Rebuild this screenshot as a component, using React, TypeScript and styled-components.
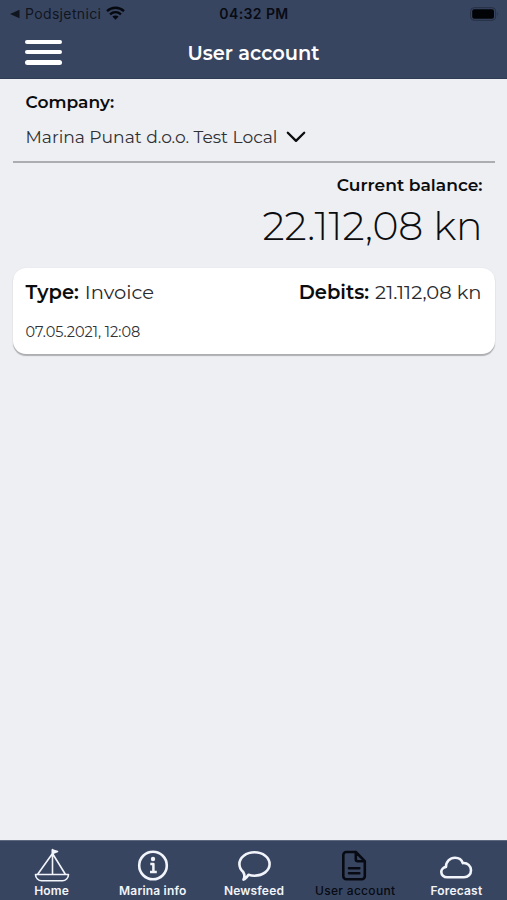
import React from 'react';
import styled, { createGlobalStyle } from 'styled-components';

const GlobalStyle = createGlobalStyle`
  * { box-sizing: border-box; }
  body { margin: 0; background: #eeeff3; font-family: Montserrat, Inter, sans-serif; color: #0b0c0e; }
`;

const Screen = styled.div`
  height: 900px;
  width: 100%;
  display: flex;
  flex-direction: column;
  overflow: hidden;
  white-space: nowrap;
`;

const Header = styled.header`
  flex: none;
  height: 79px;
  background: #384560;
  border-bottom: 1px solid #2f3b54;
`;

const StatusBar = styled.div`
  height: 27px;
  display: grid;
  grid-template-columns: 1fr auto 1fr;
  align-items: center;
  padding: 0 8px 0 10px;
  color: #080b14;
  font-family: Inter, sans-serif;
  font-size: 14px;
  line-height: 18px;
`;

const BackLink = styled.div`
  display: flex;
  align-items: center;
  letter-spacing: 0.35px;
  color: #10151f;
  > svg:first-child { margin-right: 5px; }
  > svg:last-child { margin-left: 5px; margin-top: -2px; }
`;

const Clock = styled.div`
  font-weight: 600;
  letter-spacing: 0.4px;
  margin-left: -1px;
`;

const Battery = styled.svg`
  justify-self: end;
`;

const TitleBar = styled.div`
  height: 51px;
  display: grid;
  grid-template-columns: 1fr auto 1fr;
  align-items: center;
  padding: 0 25px;
`;

const MenuButton = styled.button`
  width: 37px;
  height: 25px;
  padding: 0;
  border: 0;
  background: none;
  display: flex;
  flex-direction: column;
  justify-content: space-between;
  margin-top: -1px;
`;

const MenuLine = styled.span`
  width: 37px;
  height: 4.5px;
  border-radius: 3px;
  background: #fff;
`;

const Title = styled.h1`
  margin: 0;
  font-size: 19.4px;
  line-height: 24px;
  font-weight: 600;
  color: #fff;
`;

const Main = styled.main`
  flex: 1;
  padding: 0 12px 0 13px;
`;

const CompanySection = styled.section`
  height: 84px;
  padding: 12px 12.5px 0;
  border-bottom: 2px solid #abadb1;
`;

const Label = styled.div`
  font-size: 17.1px;
  line-height: 22px;
  font-weight: 600;
`;

const CompanySelect = styled.div`
  display: flex;
  align-items: center;
  gap: 9px;
  margin-top: 13px;
  font-size: 17.1px;
  line-height: 22px;
  color: #303134;
`;

const BalanceSection = styled.section`
  height: 105px;
  padding: 11px 12.5px 0;
  display: flex;
  flex-direction: column;
  align-items: flex-end;
`;

const Balance = styled.div`
  margin-top: 6px;
  font-size: 39.4px;
  line-height: 48px;
  font-weight: 350;
`;

const Card = styled.article`
  height: 86px;
  padding: 12px 13.5px 0 12.5px;
  border-radius: 13px;
  background: #fff;
  box-shadow: 0 2px 1px #adaeb1, 0 0 1px #d5d6da;
`;

const CardRow = styled.div`
  display: flex;
  justify-content: space-between;
`;

const Field = styled.div`
  display: flex;
  gap: 6px;
  font-size: 19.5px;
  line-height: 24px;
`;

const FieldName = styled.span`
  font-weight: 600;
`;

const FieldValue = styled.span`
  color: #292a2d;
`;

const DateText = styled.div`
  margin-top: 19px;
  font-size: 14.5px;
  line-height: 18px;
  color: #303134;
`;

const TabBar = styled.nav`
  flex: none;
  height: 60px;
  display: grid;
  grid-template-columns: repeat(5, 1fr);
  padding-left: 1px;
  background: #384560;
  border-top: 1px solid #5d687f;
`;

const Tab = styled.a<{ $active?: boolean }>`
  display: flex;
  flex-direction: column;
  align-items: center;
  padding-top: 6px;
  color: ${p => (p.$active ? '#070a12' : '#f1f4fa')};
`;

const TabLabel = styled.span<{ $active?: boolean }>`
  font-family: Inter, sans-serif;
  font-size: 12px;
  line-height: 16px;
  font-weight: ${p => (p.$active ? 500 : 600)};
  letter-spacing: ${p => (p.$active ? 0.3 : 0.18)}px;
`;

const TabIcon = styled.svg`
  width: 36px;
  height: 36px;
  fill: none;
  stroke: currentColor;
  stroke-width: 2.6;
  stroke-linecap: round;
  stroke-linejoin: round;
`;

const tabs = [
  {
    label: 'Home',
    icon: (
      <g strokeWidth="1.6">
        <path d="M18.5 2.5V27.5M18.5 6.5L3.5 27.5M18.5 6.5L31.5 27.5M1.5 27.5H34.5C34.5 31 31.5 33.8 28.5 33.8H7.5C4.5 33.8 1.5 31 1.5 27.5Z" />
        <path d="M18.5 3L23.5 4.5L18.5 6.5Z" fill="currentColor" />
      </g>
    ),
  },
  {
    label: 'Marina info',
    icon: (
      <>
        <circle cx="18" cy="18.5" r="13.8" />
        <circle cx="18" cy="12" r="2.2" fill="currentColor" stroke="none" />
        <path d="M15.3 17H18.4V24.7M15 24.9H21.8" strokeWidth="2.5" strokeLinecap="butt" />
      </>
    ),
  },
  {
    label: 'Newsfeed',
    icon: <path d="M7.2 25C4.6 22.7 3.4 20.2 3.4 17.1C3.4 10.5 10.1 5.2 18.5 5.2S33.6 10.5 33.6 17.1S26.9 28.7 18.5 28.7C16.3 28.7 14.2 28.3 12.5 27.7C10.8 30.2 9.2 32 7.5 32.6C8.3 31 8.7 27.5 7.2 25Z" />,
  },
  {
    label: 'User account',
    active: true,
    icon: <path d="M18.8 5H9.3A3 3 0 0 0 6.3 8V29.3A3 3 0 0 0 9.3 32.3H24.8A3 3 0 0 0 27.8 29.3V14.2L18.8 5V12.2A2 2 0 0 0 20.8 14.2H27.8M12 21.3H22.3M12 26.3H22.3" />,
  },
  {
    label: 'Forecast',
    icon: <path d="M9.2 30.3C5.7 30.3 3.3 28 3.3 25.1C3.3 22.2 5.5 20.2 8 19.9C7.8 14.9 12 10.7 17 10.7C21 10.7 23.8 13 24.8 16.1C29.5 15.6 33 19 33 23.2C33 27.3 30 30.3 26 30.3Z" />,
  },
];

export default function App() {
  return (
    <>
      <GlobalStyle />
      <Screen>
        <Header>
          <StatusBar>
            <BackLink>
              <svg width="10" height="10"><path d="M0 5L9.5 0.8V9.2Z" fill="currentColor" /></svg>
              Podsjetnici
              <svg width="19" height="14" viewBox="0 0 19 14">
                <path d="M1 5.2C6 .6 13 .6 18 5.2M4 8.4C7.3 5.5 11.7 5.5 15 8.4" fill="none" stroke="#05080f" strokeWidth="2.3" />
                <path d="M6.4 10.5C8.2 9 10.8 9 12.6 10.5L9.5 13.7Z" fill="#05080f" />
              </svg>
            </BackLink>
            <Clock>04:32 PM</Clock>
            <Battery width="29" height="14" viewBox="0 0 29 14">
              <rect x=".6" y=".7" width="25" height="12.6" rx="3.5" fill="none" stroke="#252f44" />
              <rect x="2.2" y="2.3" width="21.8" height="9.4" rx="2" fill="#020306" />
              <path d="M27.2 5.2Q29 7 27.2 8.8Z" fill="#252f44" />
            </Battery>
          </StatusBar>
          <TitleBar>
            <MenuButton aria-label="Menu"><MenuLine /><MenuLine /><MenuLine /></MenuButton>
            <Title>User account</Title>
          </TitleBar>
        </Header>
        <Main>
          <CompanySection>
            <Label>Company:</Label>
            <CompanySelect>
              Marina Punat d.o.o. Test Local
              <svg width="20" height="12" viewBox="0 0 20 12">
                <path d="M1.8 1.7L10 9.9L18.2 1.7" fill="none" stroke="#0b0c0e" strokeWidth="2.3" strokeLinecap="round" strokeLinejoin="round" />
              </svg>
            </CompanySelect>
          </CompanySection>
          <BalanceSection>
            <Label>Current balance:</Label>
            <Balance>22.112,08 kn</Balance>
          </BalanceSection>
          <Card>
            <CardRow>
              <Field>
                <FieldName>Type:</FieldName>
                <FieldValue>Invoice</FieldValue>
              </Field>
              <Field>
                <FieldName>Debits:</FieldName>
                <FieldValue>21.112,08 kn</FieldValue>
              </Field>
            </CardRow>
            <DateText>07.05.2021, 12:08</DateText>
          </Card>
        </Main>
        <TabBar>
          {tabs.map(t => (
            <Tab key={t.label} $active={t.active}>
              <TabIcon viewBox="0 0 36 36">{t.icon}</TabIcon>
              <TabLabel $active={t.active}>{t.label}</TabLabel>
            </Tab>
          ))}
        </TabBar>
      </Screen>
    </>
  );
}
